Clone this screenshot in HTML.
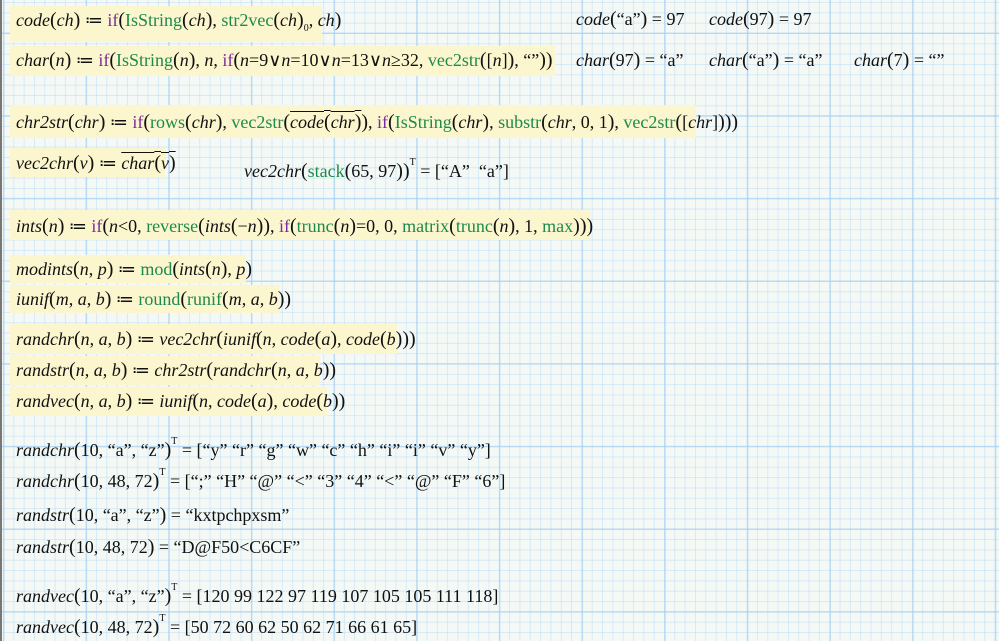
<!DOCTYPE html>
<html><head><meta charset="utf-8"><style>
html,body{margin:0;padding:0}
body{width:999px;height:641px;overflow:hidden;position:relative;background-color:#f4f9f6;
background-image:
linear-gradient(90deg,rgba(160,205,242,.6) 1.5px,transparent 1.5px),
linear-gradient(0deg,rgba(160,205,242,.6) 1.5px,transparent 1.5px),
linear-gradient(90deg,rgba(180,215,245,.45) 1px,transparent 1px),
linear-gradient(0deg,rgba(180,215,245,.45) 1px,transparent 1px);
background-size:82.67px 82.67px,82.67px 82.67px,10.333px 10.333px,10.333px 10.333px;
background-position:3px 34px,3px 34px,3px 3px,3px 3px;
font-family:"Liberation Serif",serif;font-size:18px;color:#111}
.edge{position:absolute;left:0;top:0;width:2px;height:641px;background:#777}
.b{position:absolute;background:#fcf6cf;left:10px}
.t{position:absolute;white-space:pre;line-height:20px}
i{font-style:italic}
.g{color:#1d8a4c}
.k{color:#7b2b9e}
.p{font-size:20px}
sub{font-size:10px;vertical-align:-5px}
sup{font-size:10px;vertical-align:12px}
.ov{text-decoration:overline}
</style></head><body>
<div class="edge"></div>
<div class="b" style="top:6px;width:312px;height:36px"></div>
<div class="b" style="top:46px;width:545px;height:30px"></div>
<div class="b" style="top:105px;width:686px;height:33px"></div>
<div class="b" style="top:148px;width:155px;height:29px"></div>
<div class="b" style="top:210px;width:580px;height:30px"></div>
<div class="b" style="top:255px;width:236px;height:28px"></div>
<div class="b" style="top:285px;width:270px;height:28px"></div>
<div class="b" style="top:324px;width:387px;height:30px"></div>
<div class="b" style="top:356px;width:310px;height:29px"></div>
<div class="b" style="top:387px;width:317px;height:29px"></div>

<div class="t" style="left:16px;top:10px"><i>code</i><span class="p">(</span><i>ch</i><span class="p">)</span> ≔ <span class="k">if</span><span class="p">(</span><span class="g">IsString</span><span class="p">(</span><i>ch</i><span class="p">)</span>, <span class="g">str2vec</span><span class="p">(</span><i>ch</i><span class="p">)</span><sub>0</sub>, <i>ch</i><span class="p">)</span></div>
<div class="t" style="left:16px;top:50px"><i>char</i><span class="p">(</span><i>n</i><span class="p">)</span> ≔ <span class="k">if</span><span class="p">(</span><span class="g">IsString</span><span class="p">(</span><i>n</i><span class="p">)</span>, <i>n</i>, <span class="k">if</span><span class="p">(</span><i>n</i>=9∨<i>n</i>=10∨<i>n</i>=13∨<i>n</i>≥32, <span class="g">vec2str</span><span class="p">(</span>[<i>n</i>]<span class="p">)</span>, “”<span class="p">))</span></div>
<div class="t" style="left:576px;top:9px"><i>code</i><span class="p">(</span>“a”<span class="p">)</span> = 97</div>
<div class="t" style="left:709px;top:9px"><i>code</i><span class="p">(</span>97<span class="p">)</span> = 97</div>
<div class="t" style="left:576px;top:50px"><i>char</i><span class="p">(</span>97<span class="p">)</span> = “a”</div>
<div class="t" style="left:709px;top:50px"><i>char</i><span class="p">(</span>“a”<span class="p">)</span> = “a”</div>
<div class="t" style="left:854px;top:50px"><i>char</i><span class="p">(</span>7<span class="p">)</span> = “”</div>

<div class="t" style="left:16px;top:112px"><i>chr2str</i><span class="p">(</span><i>chr</i><span class="p">)</span> ≔ <span class="k">if</span><span class="p">(</span><span class="g">rows</span><span class="p">(</span><i>chr</i><span class="p">)</span>, <span class="g">vec2str</span><span class="p">(</span><span class="ov"><i>code</i><span class="p">(</span><i>chr</i><span class="p">)</span></span><span class="p">)</span>, <span class="k">if</span><span class="p">(</span><span class="g">IsString</span><span class="p">(</span><i>chr</i><span class="p">)</span>, <span class="g">substr</span><span class="p">(</span><i>chr</i>, 0, 1<span class="p">)</span>, <span class="g">vec2str</span><span class="p">(</span>[<i>chr</i>]<span class="p">)))</span></div>
<div class="t" style="left:16px;top:153px"><i>vec2chr</i><span class="p">(</span><i>v</i><span class="p">)</span> ≔ <span class="ov"><i>char</i><span class="p">(</span><i>v</i><span class="p">)</span></span></div>
<div class="t" style="left:244px;top:153px"><i>vec2chr</i><span class="p">(</span><span class="g">stack</span><span class="p">(</span>65, 97<span class="p">))</span><sup>T</sup> = [“A”  “a”]</div>

<div class="t" style="left:16px;top:216px"><i>ints</i><span class="p">(</span><i>n</i><span class="p">)</span> ≔ <span class="k">if</span><span class="p">(</span><i>n</i>&lt;0, <span class="g">reverse</span><span class="p">(</span><i>ints</i><span class="p">(</span>−<i>n</i><span class="p">))</span>, <span class="k">if</span><span class="p">(</span><span class="g">trunc</span><span class="p">(</span><i>n</i><span class="p">)</span>=0, 0, <span class="g">matrix</span><span class="p">(</span><span class="g">trunc</span><span class="p">(</span><i>n</i><span class="p">)</span>, 1, <span class="g">max</span><span class="p">)))</span></div>
<div class="t" style="left:16px;top:259px"><i>modints</i><span class="p">(</span><i>n</i>, <i>p</i><span class="p">)</span> ≔ <span class="g">mod</span><span class="p">(</span><i>ints</i><span class="p">(</span><i>n</i><span class="p">)</span>, <i>p</i><span class="p">)</span></div>
<div class="t" style="left:16px;top:289px"><i>iunif</i><span class="p">(</span><i>m</i>, <i>a</i>, <i>b</i><span class="p">)</span> ≔ <span class="g">round</span><span class="p">(</span><span class="g">runif</span><span class="p">(</span><i>m</i>, <i>a</i>, <i>b</i><span class="p">))</span></div>
<div class="t" style="left:16px;top:329px"><i>randchr</i><span class="p">(</span><i>n</i>, <i>a</i>, <i>b</i><span class="p">)</span> ≔ <i>vec2chr</i><span class="p">(</span><i>iunif</i><span class="p">(</span><i>n</i>, <i>code</i><span class="p">(</span><i>a</i><span class="p">)</span>, <i>code</i><span class="p">(</span><i>b</i><span class="p">)))</span></div>
<div class="t" style="left:16px;top:360px"><i>randstr</i><span class="p">(</span><i>n</i>, <i>a</i>, <i>b</i><span class="p">)</span> ≔ <i>chr2str</i><span class="p">(</span><i>randchr</i><span class="p">(</span><i>n</i>, <i>a</i>, <i>b</i><span class="p">))</span></div>
<div class="t" style="left:16px;top:391px"><i>randvec</i><span class="p">(</span><i>n</i>, <i>a</i>, <i>b</i><span class="p">)</span> ≔ <i>iunif</i><span class="p">(</span><i>n</i>, <i>code</i><span class="p">(</span><i>a</i><span class="p">)</span>, <i>code</i><span class="p">(</span><i>b</i><span class="p">))</span></div>

<div class="t" style="left:16px;top:432px"><i>randchr</i><span class="p">(</span>10, “a”, “z”<span class="p">)</span><sup>T</sup> = [“y” “r” “g” “w” “c” “h” “i” “i” “v” “y”]</div>
<div class="t" style="left:16px;top:463px"><i>randchr</i><span class="p">(</span>10, 48, 72<span class="p">)</span><sup>T</sup> = [“;” “H” “@” “&lt;” “3” “4” “&lt;” “@” “F” “6”]</div>
<div class="t" style="left:16px;top:505px"><i>randstr</i><span class="p">(</span>10, “a”, “z”<span class="p">)</span> = “kxtpchpxsm”</div>
<div class="t" style="left:16px;top:537px"><i>randstr</i><span class="p">(</span>10, 48, 72<span class="p">)</span> = “D@F50&lt;C6CF”</div>
<div class="t" style="left:16px;top:578px"><i>randvec</i><span class="p">(</span>10, “a”, “z”<span class="p">)</span><sup>T</sup> = [120 99 122 97 119 107 105 105 111 118]</div>
<div class="t" style="left:16px;top:609px"><i>randvec</i><span class="p">(</span>10, 48, 72<span class="p">)</span><sup>T</sup> = [50 72 60 62 50 62 71 66 61 65]</div>
</body></html>
